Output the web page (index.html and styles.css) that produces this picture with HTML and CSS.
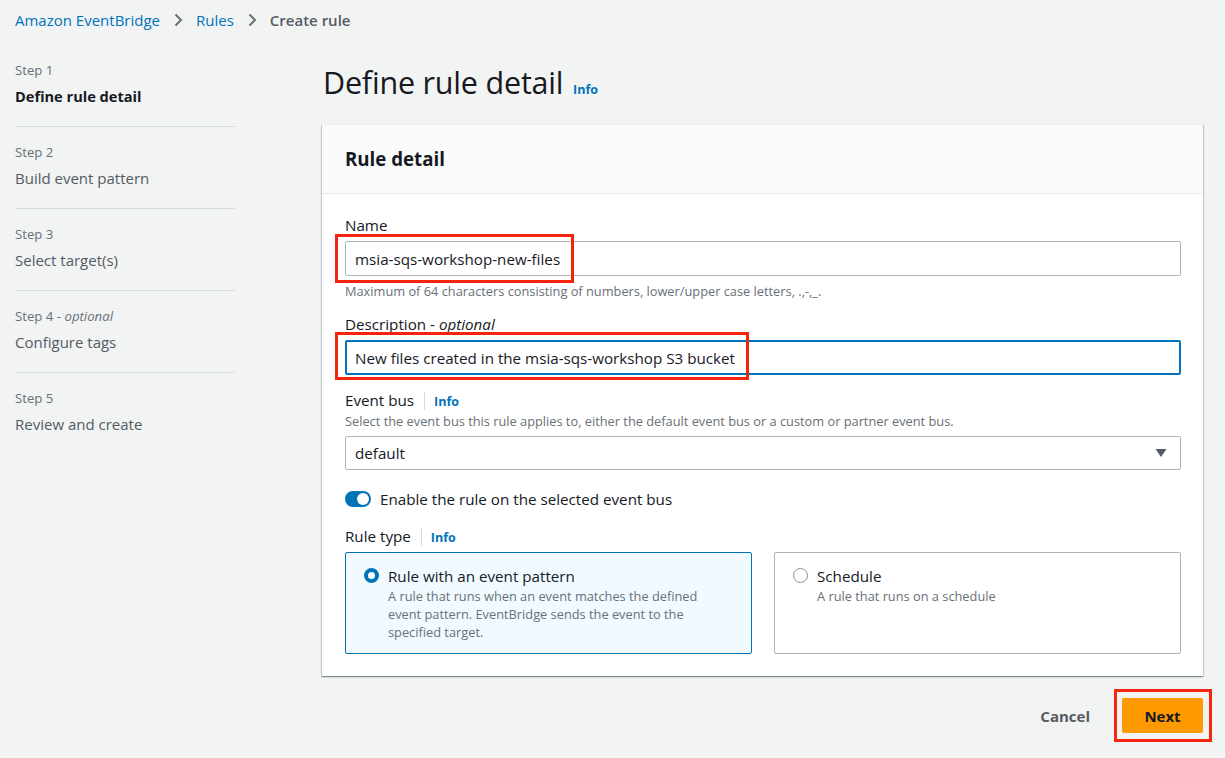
FILE: index.html
```html
<!DOCTYPE html>
<html lang="en">
<head>
<meta charset="utf-8">
<title>Create rule</title>
<link rel="stylesheet" href="styles.css">
</head>
<body>
<div class="page">
  <nav class="breadcrumbs">
    <a class="crumb-link">Amazon EventBridge</a>
    <svg class="crumb-sep" width="16" height="16" viewBox="0 0 16 16"><path d="M5.5 2.5 L11 8 L5.5 13.5" fill="none" stroke="#687078" stroke-width="2"/></svg>
    <a class="crumb-link">Rules</a>
    <svg class="crumb-sep" width="16" height="16" viewBox="0 0 16 16"><path d="M5.5 2.5 L11 8 L5.5 13.5" fill="none" stroke="#687078" stroke-width="2"/></svg>
    <span class="crumb-current">Create rule</span>
  </nav>

  <div class="layout">
    <aside class="steps">
      <div class="step">
        <div class="step-num">Step 1</div>
        <div class="step-title active">Define rule detail</div>
      </div>
      <div class="step">
        <div class="step-num">Step 2</div>
        <div class="step-title">Build event pattern</div>
      </div>
      <div class="step">
        <div class="step-num">Step 3</div>
        <div class="step-title">Select target(s)</div>
      </div>
      <div class="step">
        <div class="step-num">Step 4 - <i>optional</i></div>
        <div class="step-title">Configure tags</div>
      </div>
      <div class="step">
        <div class="step-num">Step 5</div>
        <div class="step-title">Review and create</div>
      </div>
    </aside>

    <main class="main">
      <h1 class="page-title">Define rule detail <span class="info">Info</span></h1>

      <section class="card">
        <header class="card-header"><h2>Rule detail</h2></header>
        <div class="card-body">
          <div class="field field-name">
            <div class="label">Name</div>
            <div class="input-wrap">
              <div class="input">msia-sqs-workshop-new-files</div>
              <div class="annot annot-name"></div>
            </div>
            <div class="hint">Maximum of 64 characters consisting of numbers, lower/upper case letters, .,-,_.</div>
          </div>

          <div class="field field-desc">
            <div class="label">Description - <i>optional</i></div>
            <div class="input-wrap">
              <div class="input focused">New files created in the msia-sqs-workshop S3 bucket</div>
              <div class="annot annot-desc"></div>
            </div>
          </div>

          <div class="field field-bus">
            <div class="label">Event bus<span class="label-sep"></span><span class="info">Info</span></div>
            <div class="hint hint-top">Select the event bus this rule applies to, either the default event bus or a custom or partner event bus.</div>
            <div class="input select">default
              <svg class="caret" width="12" height="10" viewBox="0 0 12 10"><path d="M0.5 1 H11.5 L6 9 Z" fill="#545b64"/></svg>
            </div>
          </div>

          <div class="toggle-row">
            <span class="toggle"><span class="knob"></span></span>
            <span>Enable the rule on the selected event bus</span>
          </div>

          <div class="field field-type">
            <div class="label">Rule type<span class="label-sep"></span><span class="info">Info</span></div>
            <div class="tiles">
              <div class="tile selected">
                <span class="radio checked"></span>
                <div>
                  <div class="tile-title">Rule with an event pattern</div>
                  <div class="tile-desc">A rule that runs when an event matches the defined event pattern. EventBridge sends the event to the specified target.</div>
                </div>
              </div>
              <div class="tile">
                <span class="radio"></span>
                <div>
                  <div class="tile-title">Schedule</div>
                  <div class="tile-desc">A rule that runs on a schedule</div>
                </div>
              </div>
            </div>
          </div>
        </div>
      </section>

      <div class="actions">
        <button class="btn-link">Cancel</button>
        <div class="next-wrap">
          <button class="btn-primary">Next</button>
          <div class="annot annot-next"></div>
        </div>
      </div>
    </main>
  </div>
</div>
</body>
</html>
```

FILE: styles.css
```css
* { box-sizing: border-box; }

html, body {
  margin: 0;
  padding: 0;
  background: #f2f3f3;
  font-family: "Open Sans", "Noto Sans", sans-serif;
  color: #16191f;
}

.page {
  padding: 0 22px 25px 15px;
  min-height: 758px;
}

.breadcrumbs {
  display: flex;
  align-items: center;
  height: 40px;
  font-size: 15px;
}
.crumb-link { color: #0073bb; }
.crumb-sep { margin: 0 10px 0 10px; }
.crumb-current { color: #545b64; font-weight: 600; }

.layout {
  display: flex;
  gap: 87px;
}

.steps {
  width: 220px;
  flex: none;
  padding-top: 21px;
}
.step {
  padding: 16px 0 20px;
  border-bottom: 1px solid #d5dbdb;
}
.step:first-child { padding-top: 0; }
.step:last-child { border-bottom: none; }
.step-num {
  font-size: 13.2px;
  color: #687078;
  line-height: 18px;
}
.step-title {
  font-size: 15px;
  color: #545b64;
  line-height: 20px;
  margin-top: 7px;
}
.step-title.active { color: #16191f; font-weight: 700; font-size: 14.6px; }

.main { flex: 1; min-width: 0; }

.page-title {
  margin: 23px 0 0 1px;
  font-size: 30.5px;
  font-weight: 400;
  line-height: 38px;
  height: 44px;
  letter-spacing: -0.2px;
}
.info {
  color: #0073bb;
  font-size: 12.5px;
  font-weight: 700;
  margin-left: 2px;
  letter-spacing: 0;
}

.card {
  margin-top: 17px;
  background: #fff;
  box-shadow: 0 1px 1px 0 rgba(0,28,36,0.3), 1px 1px 1px 0 rgba(0,28,36,0.15), -1px 1px 1px 0 rgba(0,28,36,0.15);
  border-top: 1px solid #eaeded;
}
.card-header {
  background: #fafafa;
  border-bottom: 1px solid #eaeded;
  height: 69px;
  padding: 0 23px 2px;
  display: flex;
  align-items: center;
}
.card-header h2 {
  margin: 0;
  font-size: 18.7px;
  font-weight: 700;
}
.card-body {
  padding: 20px 22px 22px 23px;
}

.label {
  font-size: 15.2px;
  line-height: 22px;
  height: 22px;
  white-space: nowrap;
}
.label-sep {
  display: inline-block;
  vertical-align: middle;
  width: 1px;
  height: 18px;
  background: #d5dbdb;
  margin: -2px 9px 0 10px;
}
.label .info { margin-left: 0; }

.input-wrap { position: relative; margin-top: 5px; }
.input {
  height: 35px;
  border: 1px solid #aab7b8;
  border-radius: 2px;
  padding: 0 9px;
  font-size: 15.2px;
  display: flex;
  align-items: center;
  background: #fff;
}
.input.focused {
  border: 2px solid #0073bb;
  padding: 0 8px;
}
.select {
  margin-top: 6px;
  height: 34px;
  justify-content: space-between;
  padding-right: 13px;
}
.hint {
  font-size: 12.8px;
  color: #687078;
  line-height: 18px;
  margin-top: 6px;
}
.hint-top { margin-top: 1px; }

.field-desc { margin-top: 13px; }
.field-bus { margin-top: 14px; }

.toggle-row {
  display: flex;
  align-items: center;
  gap: 9px;
  font-size: 15.2px;
  margin-top: 21px;
  height: 16px;
}
.toggle {
  width: 26px;
  height: 16px;
  border-radius: 8px;
  background: #0073bb;
  position: relative;
  display: inline-block;
  flex: none;
}
.knob {
  position: absolute;
  right: 2px;
  top: 2px;
  width: 12px;
  height: 12px;
  border-radius: 50%;
  background: #fff;
}

.field-type { margin-top: 18px; }

.tiles {
  margin-top: 5px;
  display: grid;
  grid-template-columns: 1fr 1fr;
  gap: 22px;
}
.tile {
  border: 1px solid #aab7b8;
  border-radius: 2px;
  height: 102px;
  padding: 12px 22px 12px 18px;
  display: flex;
  gap: 9px;
  align-items: flex-start;
}
.tile.selected {
  background: #f1faff;
  border-color: #0073bb;
}
.radio {
  flex: none;
  width: 15px;
  height: 15px;
  margin-top: 3px;
  border-radius: 50%;
  border: 1px solid #879596;
  background: #fff;
}
.radio.checked {
  border: 4px solid #0073bb;
}
.tile-title {
  font-size: 15.2px;
  line-height: 22px;
}
.tile-desc {
  font-size: 12.8px;
  line-height: 18px;
  color: #687078;
}

.actions {
  display: flex;
  justify-content: flex-end;
  align-items: center;
  margin-top: 22px;
  gap: 32px;
}
.btn-link {
  border: none;
  background: none;
  font-family: inherit;
  font-size: 15px;
  font-weight: 700;
  color: #545b64;
  padding: 0;
}
.next-wrap { position: relative; }
.btn-primary {
  background: #ff9900;
  border: none;
  border-radius: 2px;
  width: 81px;
  height: 35px;
  font-family: inherit;
  font-size: 15px;
  font-weight: 700;
  color: #16191f;
  display: block;
}

.annot {
  position: absolute;
  border: 3px solid #f5250d;
  pointer-events: none;
}
.annot-name { left: -10px; top: -7px; width: 239px; height: 49px; }
.annot-desc { left: -10px; top: -8px; width: 414px; height: 48px; }
.annot-next { left: -8px; top: -9px; width: 98px; height: 53px; }
```
